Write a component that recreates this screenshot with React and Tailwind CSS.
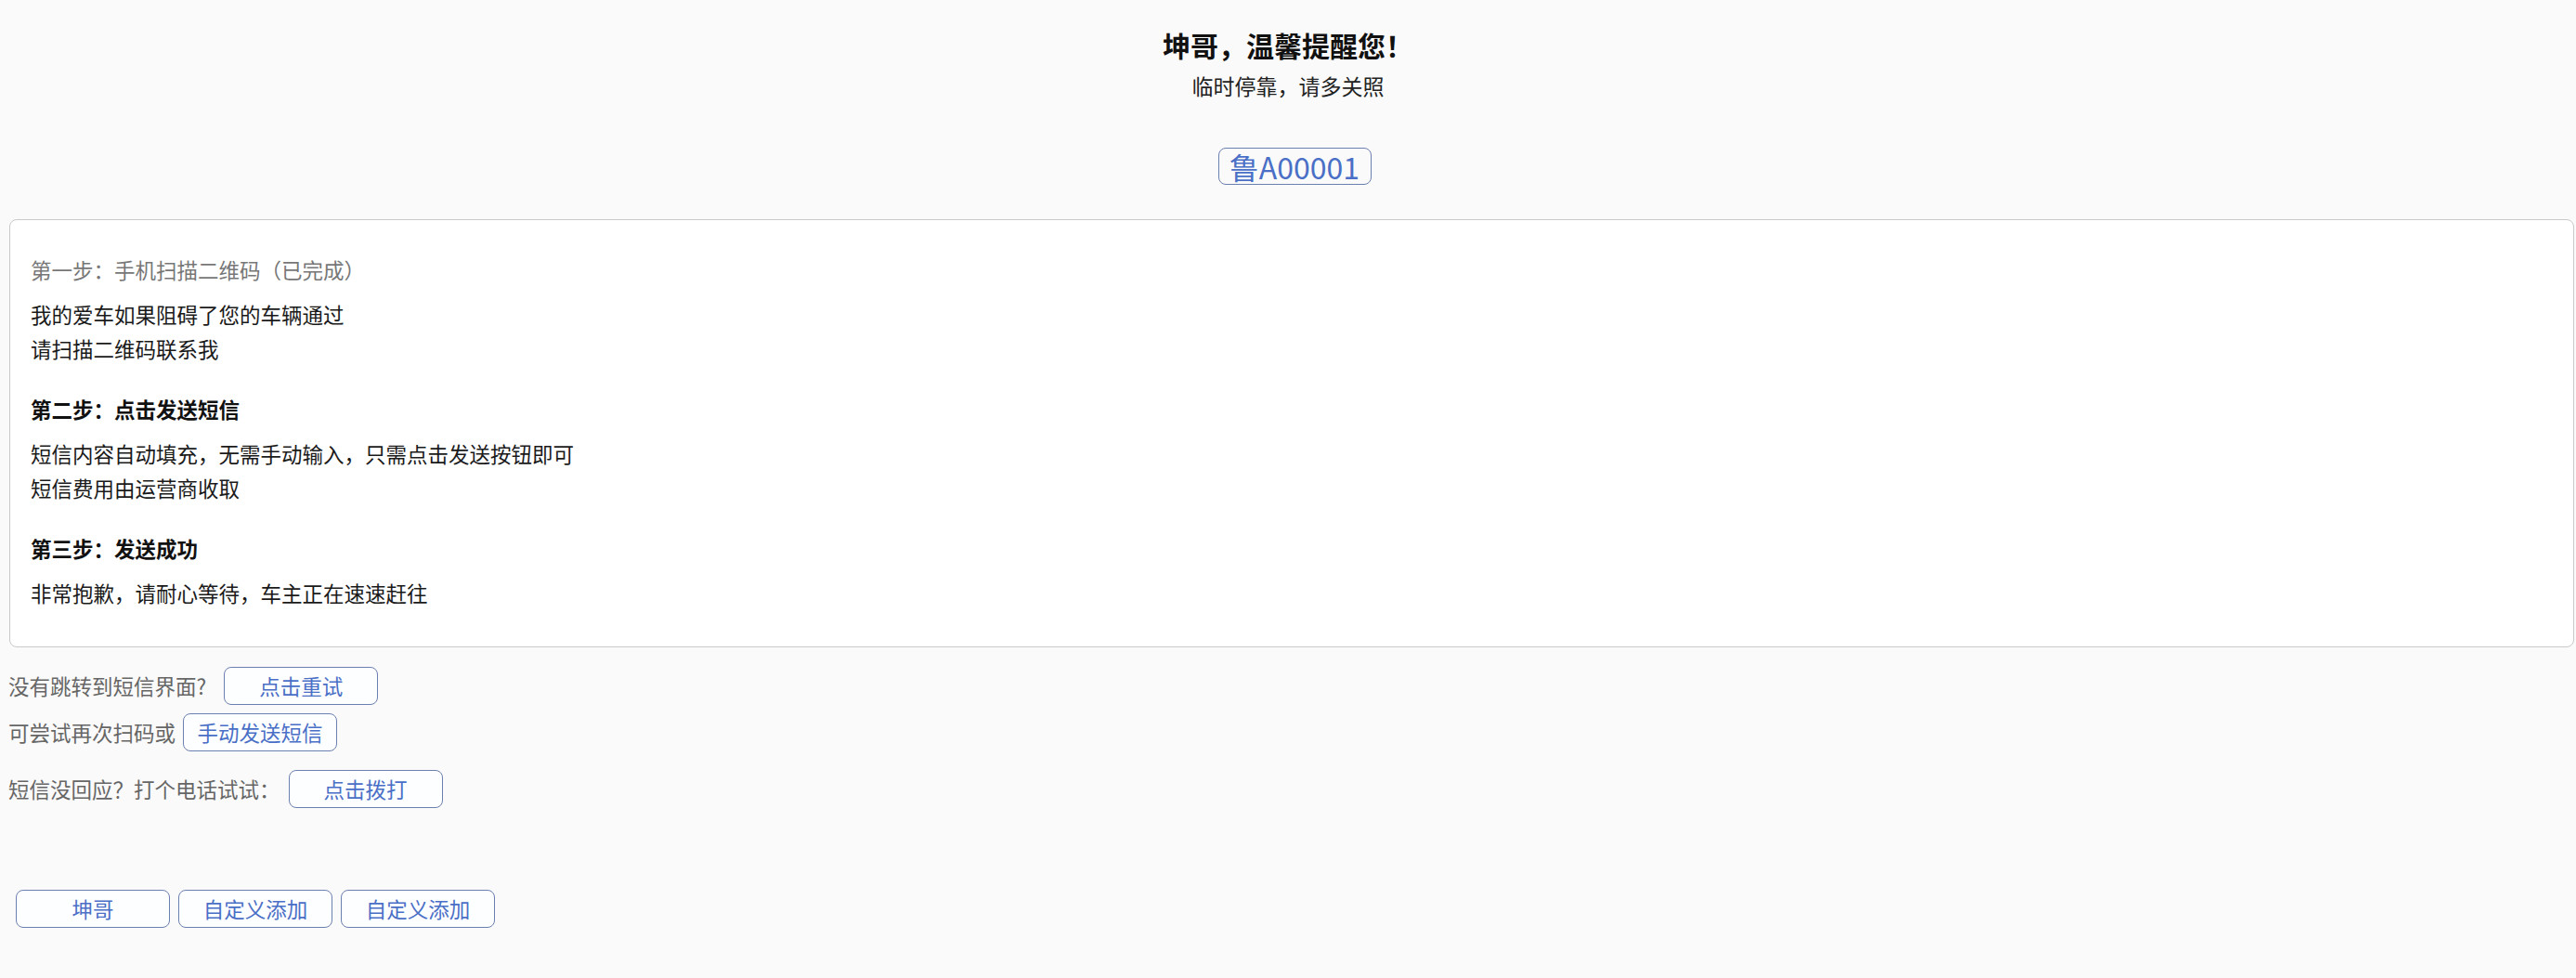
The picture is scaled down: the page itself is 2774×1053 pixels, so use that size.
import React from "react";

const font = { fontFamily: '"Noto Sans CJK SC", "Noto Sans", sans-serif' };

const OutlineButton = ({ children, className = "" }) => (
    <button
        type="button"
        className={`h-[41px] w-[166px] rounded-[8px] border border-[#6b7fb0] bg-[#fdfeff] text-[22.5px] leading-none text-[#4a6fc6] ${className}`}
    >
        {children}
    </button>
);

const Step = ({ title, lines, muted = false, last = false }) => (
    <div className={last ? "" : "mb-[28px]"}>
        <div className={`mb-[11px] ${muted ? "text-[#777777]" : "font-bold text-[#111111]"}`}>{title}</div>
        {lines.map((line) => (
            <div key={line} className="text-[#1a1a1a]">{line}</div>
        ))}
    </div>
);

export default function App() {
    return (
        <div className="min-h-screen w-full bg-[#fafafa]" style={font}>
            {/* header */}
            <div className="flex flex-col items-center pt-[30px]">
                <h1 className="text-[30px] font-bold leading-[36px] text-[#111111]">坤哥，温馨提醒您！</h1>
                <p className="mt-[11px] text-[23px] leading-[30px] text-[#222222]">临时停靠，请多关照</p>
                <button
                    type="button"
                    className="ml-[14px] mt-[52px] flex h-[40px] w-[165px] items-center justify-center rounded-[8px] border border-[#6b7fb0] text-[32px] leading-none text-[#4a6fc6]"
                >
                    鲁A00001
                </button>
            </div>

            {/* steps card */}
            <div className="ml-[10px] mr-[2px] mt-[37px] rounded-[8px] border border-[#c9c9c9] bg-white pb-[39px] pl-[22px] pt-[35px] text-[22.5px] leading-[37px]">
                <Step muted title="第一步：手机扫描二维码（已完成）" lines={["我的爱车如果阻碍了您的车辆通过", "请扫描二维码联系我"]} />
                <Step title="第二步：点击发送短信" lines={["短信内容自动填充，无需手动输入，只需点击发送按钮即可", "短信费用由运营商收取"]} />
                <Step last title="第三步：发送成功" lines={["非常抱歉，请耐心等待，车主正在速速赶往"]} />
            </div>

            {/* fallbacks */}
            <div className="ml-[9px] mt-[21px] flex flex-col text-[22.5px] text-[#666666]">
                <div className="flex items-center">
                    <span>没有跳转到短信界面?</span>
                    <OutlineButton className="ml-[19px]">点击重试</OutlineButton>
                </div>
                <div className="mt-[9px] flex items-center">
                    <span>可尝试再次扫码或</span>
                    <OutlineButton className="ml-[8px]">手动发送短信</OutlineButton>
                </div>
                <div className="mt-[20px] flex items-center">
                    <span>短信没回应？打个电话试试：</span>
                    <OutlineButton className="ml-[9px]">点击拨打</OutlineButton>
                </div>
            </div>

            {/* contacts */}
            <div className="ml-[17px] mt-[88px] flex gap-[9px] pb-[51px]">
                <OutlineButton className="w-[165px]">坤哥</OutlineButton>
                <OutlineButton className="w-[165px]">自定义添加</OutlineButton>
                <OutlineButton className="w-[165px]">自定义添加</OutlineButton>
            </div>
        </div>
    );
}
